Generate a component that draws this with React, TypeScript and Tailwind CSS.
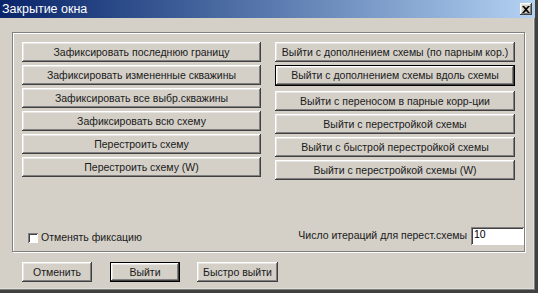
const leftButtons = [
  'Зафиксировать последнюю границу',
  'Зафиксировать измененные скважины',
  'Зафиксировать все выбр.скважины',
  'Зафиксировать всю схему',
  'Перестроить схему',
  'Перестроить схему (W)',
];

const rightButtons = [
  'Выйти с дополнением схемы (по парным кор.)',
  'Выйти с дополнением схемы вдоль схемы',
  'Выйти с переносом в парные корр-ции',
  'Выйти с перестройкой схемы',
  'Выйти с быстрой перестройкой схемы',
  'Выйти с перестройкой схемы (W)',
];

const raised =
  'shadow-[inset_-1px_-1px_#404040,inset_1px_1px_#ffffff,inset_-2px_-2px_#808080,inset_2px_2px_#e8e6e2]';

const WinButton = ({ label, focused, className }: { label: string; focused?: boolean; className?: string }) => (
  <button
    type="button"
    className={
      'flex items-center justify-center bg-[#d4d0c8] text-[10.5px] leading-none text-[#1a1a1a] ' +
      (focused ? 'border border-black ' : '') +
      raised +
      ' ' +
      (className ?? '')
    }
  >
    {label}
  </button>
);

const App = () => {
  return (
    <div className="w-[538px] h-[293px] bg-[#d4d0c8] flex flex-col font-['Liberation_Sans',Arial,sans-serif] border-r-[3px] border-b-[3px] border-r-[#404040] border-b-[#404040] shadow-[inset_-1px_-1px_#808080,inset_-2px_-2px_#e0ded9]">
      <div className="h-[18px] flex items-center justify-between bg-gradient-to-r from-[#0a246a] to-[#b4d2f2] pl-[2px] pr-[3px]">
        <span className="text-[12.5px] text-white leading-none">Закрытие окна</span>
        <div className={'w-[12px] h-[12px] bg-[#d4d0c8] flex items-center justify-center ' + raised}>
          <svg width="8" height="7" viewBox="0 0 8 7">
            <path d="M0 0h2l2 2 2-2h2L5 3.5 8 7H6L4 5 2 7H0l3-3.5z" fill="#000" />
          </svg>
        </div>
      </div>

      <div className="ml-[12px] mt-[14px] w-[513px] h-[220px] border border-[#808080] shadow-[1px_1px_0_#ffffff,inset_1px_1px_0_#ffffff] flex flex-col justify-between">
        <div className="flex gap-[14px] pl-[9px] pt-[9px]">
          <div className="flex flex-col gap-[3px] w-[239px]">
            {leftButtons.map((b) => (
              <WinButton key={b} label={b} className="h-[20px] w-full" />
            ))}
          </div>
          <div className="flex flex-col gap-[3px] w-[240px]">
            {rightButtons.map((b, i) => (
              <WinButton
                key={b}
                label={b}
                focused={i === 1}
                className={'w-full ' + (i === 1 ? 'h-[21px] mb-[2px]' : 'h-[20px]')}
              />
            ))}
          </div>
        </div>

        <div className="flex items-end justify-between pl-[15px] pb-[6px]">
          <label className="flex items-center gap-[3px] text-[10.5px] text-[#1a1a1a] mb-[-1px]">
            <span className="w-[10px] h-[10px] bg-white shadow-[inset_1px_1px_#808080,inset_-1px_-1px_#ffffff,inset_2px_2px_#404040]" />
            Отменять фиксацию
          </label>
          <div className="flex items-center gap-[4px]">
            <span className="text-[10.5px] text-[#1a1a1a]">Число итераций для перест.схемы</span>
            <div className="w-[53px] h-[18px] bg-white text-[10.5px] leading-none pl-[3px] pt-[2px] shadow-[inset_1px_1px_#808080,inset_-1px_-1px_#ffffff,inset_2px_2px_#404040]">
              10
            </div>
          </div>
        </div>
      </div>

      <div className="flex pl-[22px] mt-[10px] gap-[18px]">
        <WinButton label="Отменить" className="w-[70px] h-[20px]" />
        <WinButton label="Выйти" focused className="w-[70px] h-[20px]" />
        <WinButton label="Быстро выйти" className="w-[81px] h-[20px] -ml-[1px]" />
      </div>
    </div>
  );
};

export default App;
